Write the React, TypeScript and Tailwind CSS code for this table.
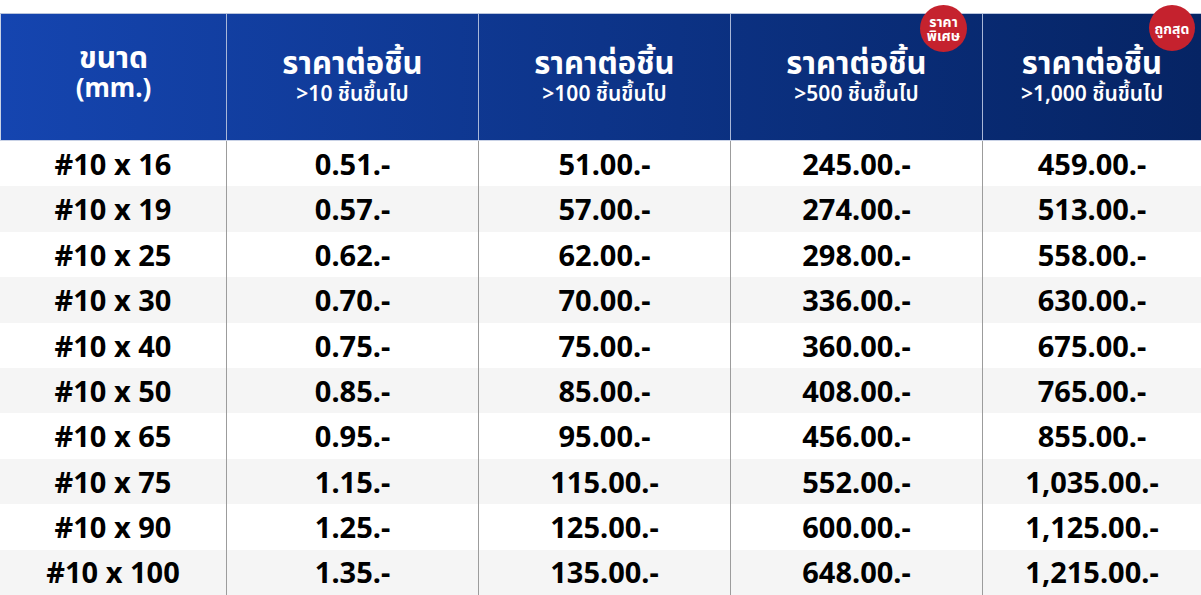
import React from 'react';

const rows = [
    ['#10 x 16', '0.51.-', '51.00.-', '245.00.-', '459.00.-'],
    ['#10 x 19', '0.57.-', '57.00.-', '274.00.-', '513.00.-'],
    ['#10 x 25', '0.62.-', '62.00.-', '298.00.-', '558.00.-'],
    ['#10 x 30', '0.70.-', '70.00.-', '336.00.-', '630.00.-'],
    ['#10 x 40', '0.75.-', '75.00.-', '360.00.-', '675.00.-'],
    ['#10 x 50', '0.85.-', '85.00.-', '408.00.-', '765.00.-'],
    ['#10 x 65', '0.95.-', '95.00.-', '456.00.-', '855.00.-'],
    ['#10 x 75', '1.15.-', '115.00.-', '552.00.-', '1,035.00.-'],
    ['#10 x 90', '1.25.-', '125.00.-', '600.00.-', '1,125.00.-'],
    ['#10 x 100', '1.35.-', '135.00.-', '648.00.-', '1,215.00.-'],
];

const headers = ['>10 ชิ้นขึ้นไป', '>100 ชิ้นขึ้นไป', '>500 ชิ้นขึ้นไป', '>1,000 ชิ้นขึ้นไป'];

const cols = 'grid grid-cols-[226px_252px_252px_252px_219px]';

export default function App() {
    return (
        <div
            className="w-[1201px] h-[595px] bg-white overflow-hidden pt-[13px]"
            style={{ fontFamily: '"Noto Sans", "Noto Sans Thai", "Noto Sans Thai UI", sans-serif' }}
        >
            {/* หัวตาราง */}
            <div className={`${cols} h-[128px] bg-linear-to-r from-[#1545b0] to-[#062464] border-t border-[#b9c4dc] border-b border-b-[#c9d2e6] text-white`}>
                <div className="flex flex-col items-center pt-[28px] border-l border-[#c9d2e6] leading-[30px]">
                    <span className="text-[30px] font-bold">ขนาด</span>
                    <span className="text-[26px] font-bold">(mm.)</span>
                </div>
                {headers.map((h, i) => (
                    <div key={h} className="relative flex flex-col items-center pt-[30px] border-l border-[#a9b7d8]">
                        <span className="text-[31px] font-bold leading-[36px]">ราคาต่อชิ้น</span>
                        <span className="text-[21px] font-semibold leading-[26px]">{h}</span>
                        {i === 2 && (
                            <span className="absolute right-[15px] -top-[9px] w-[47px] h-[47px] rounded-full bg-[#c5222e] flex flex-col items-center justify-center text-[14px] font-bold leading-[14px]">
                                <span>ราคา</span>
                                <span>พิเศษ</span>
                            </span>
                        )}
                        {i === 3 && (
                            <span className="absolute right-[6px] -top-[9px] w-[46px] h-[46px] rounded-full bg-[#c5222e] flex items-center justify-center text-[14px] font-bold">
                                ถูกสุด
                            </span>
                        )}
                    </div>
                ))}
            </div>

            {/* ข้อมูล */}
            {rows.map((r, ri) => (
                <div key={r[0]} className={`${cols} h-[45.4px] ${ri % 2 ? 'bg-[#f5f5f5]' : 'bg-white'}`}>
                    {r.map((c, ci) => (
                        <div
                            key={ci}
                            className={`flex items-center justify-center text-[29px] font-bold text-black ${ci > 0 ? 'border-l border-[#9c9c9c]' : ''}`}
                        >
                            {c}
                        </div>
                    ))}
                </div>
            ))}
        </div>
    );
}
